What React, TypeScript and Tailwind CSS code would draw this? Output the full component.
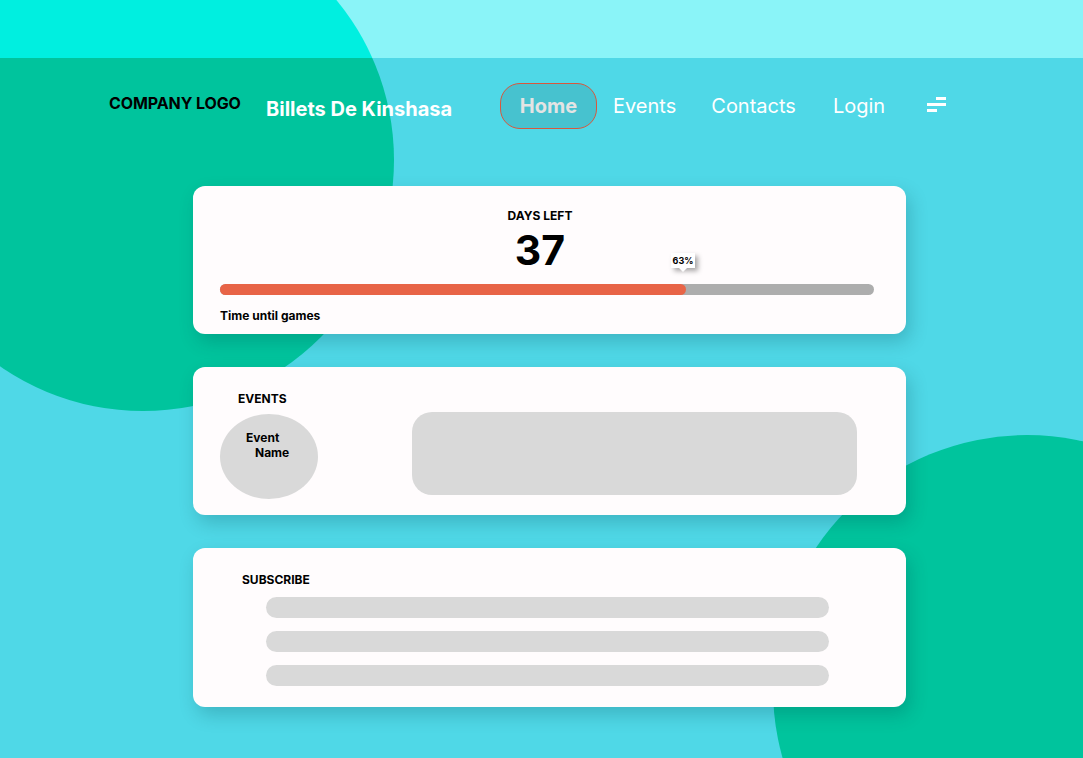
import { ReactNode } from "react";

const navLinks = ["Events", "Contacts", "Login"];

const Card = ({ className, children }: { className: string; children: ReactNode }) => (
  <div
    className={`w-[713px] rounded-[12px] bg-[#fffcfd] shadow-[4px_8px_18px_rgba(0,60,70,0.22)] ${className}`}
  >
    {children}
  </div>
);

const MenuIcon = () => (
  <svg width="19" height="15" viewBox="0 0 19 15" className="mt-[-4px]">
    <rect x="9" y="0" width="10" height="3" fill="#ffffff" />
    <rect x="0" y="6" width="19" height="3" fill="#ffffff" />
    <rect x="0" y="12" width="10" height="3" fill="#ffffff" />
  </svg>
);

const App = () => {
  return (
    <div
      className="relative min-h-[758px] w-full overflow-hidden bg-[#4fd8e7] text-black"
      style={{ fontFamily: "Inter, 'Noto Sans', sans-serif" }}
    >
      {/* background blobs */}
      <div className="absolute left-[-108px] top-[-91px] h-[502px] w-[502px] rounded-full bg-[#00c49d]" />
      <div className="absolute left-[773px] top-[435px] h-[508px] w-[508px] rounded-full bg-[#00c49d]" />

      {/* top strip */}
      <div className="relative z-10 h-[58px] overflow-hidden bg-[#8af4f8]">
        <div className="absolute left-[-108px] top-[-91px] h-[502px] w-[502px] rounded-full bg-[#00efe0]" />
      </div>

      {/* nav */}
      <nav className="relative z-10 mt-[25px] flex h-[46px] items-center pl-[109px]">
        <span className="mt-[-6px] w-[132px] whitespace-nowrap text-[16px] font-bold tracking-[-0.1px] text-black">
          COMPANY LOGO
        </span>
        <span className="ml-[25px] mt-[5px] w-[186px] whitespace-nowrap text-[20px] font-bold text-white">
          Billets De Kinshasa
        </span>
        <a className="ml-[48px] flex h-[46px] w-[97px] items-center justify-center rounded-[20px] border border-[#d9573c] bg-[#47c2cf] text-[20px] font-bold text-[#e4e4e4]">
          Home
        </a>
        <a className="ml-[16px] mt-[-1px] text-[20px] text-white">{navLinks[0]}</a>
        <a className="ml-[35px] mt-[-1px] text-[20px] text-white">{navLinks[1]}</a>
        <a className="ml-[37px] mt-[-1px] text-[20px] text-white">{navLinks[2]}</a>
        <div className="ml-[42px]">
          <MenuIcon />
        </div>
      </nav>

      <main className="relative z-10 ml-[193px] mt-[57px] flex flex-col gap-[33px] pb-[51px]">
        {/* countdown */}
        <Card className="h-[148px] pl-[27px] pr-[32px] pt-[22px]">
          <div className="mr-[14px] text-center text-[12px] font-bold leading-[15px]">DAYS LEFT</div>
          <div className="mr-[14px] mt-[5px] text-center text-[41px] font-bold leading-[44px]">37</div>
          <div className="relative mt-[12px] h-[11px] rounded-full bg-[#adadad]">
            <div className="h-full w-[71.3%] rounded-full bg-[#e86447]" />
            <div className="absolute bottom-[27px] left-[451px] flex h-[15px] w-[24px] items-center justify-center bg-white text-[9px] font-bold shadow-[3px_3px_5px_rgba(0,0,0,0.35)]">
              63%
              <span className="absolute bottom-[-4px] left-[8px] h-0 w-0 border-x-[4px] border-t-[4px] border-x-transparent border-t-white" />
            </div>
          </div>
          <div className="mt-[13px] text-[12px] font-bold leading-[15px]">Time until games</div>
        </Card>

        {/* events */}
        <Card className="h-[148px] px-[27px] pt-[24px]">
          <div className="ml-[18px] text-[12px] font-bold leading-[15px]">EVENTS</div>
          <div className="mt-[6px] flex items-start">
            <div className="mt-[2px] h-[85px] w-[98px] rounded-[50%] bg-[#d9d9d9] pl-[26px] pt-[16px] text-[12px] font-bold leading-[15px]">
              <div>Event</div>
              <div className="pl-[9px]">Name</div>
            </div>
            <div className="ml-[94px] h-[83px] w-[445px] rounded-[20px] bg-[#d9d9d9]" />
          </div>
        </Card>

        {/* subscribe */}
        <Card className="h-[159px] pl-[49px] pt-[24px]">
          <div className="text-[12px] font-bold leading-[15px]">SUBSCRIBE</div>
          <div className="ml-[24px] mt-[10px] flex flex-col gap-[13px]">
            <div className="h-[21px] w-[563px] rounded-full bg-[#d9d9d9]" />
            <div className="h-[21px] w-[563px] rounded-full bg-[#d9d9d9]" />
            <div className="h-[21px] w-[563px] rounded-full bg-[#d9d9d9]" />
          </div>
        </Card>
      </main>
    </div>
  );
};

export default App;
